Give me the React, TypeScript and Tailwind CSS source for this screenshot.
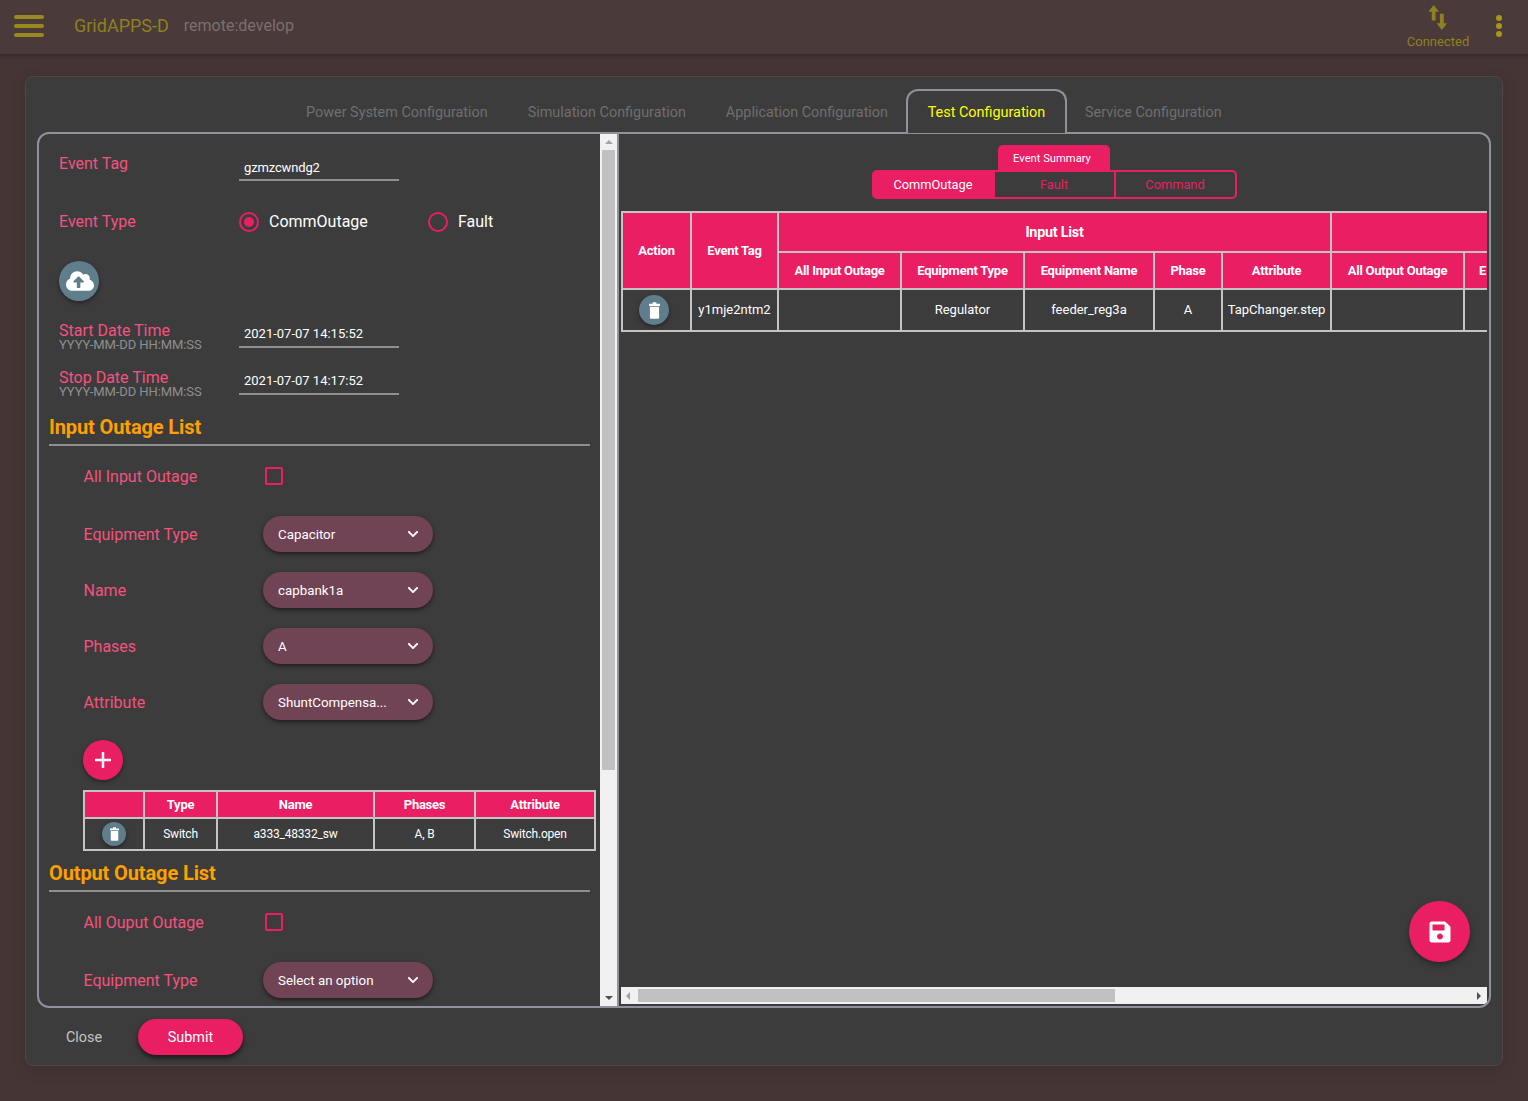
import { FaChevronDown, FaCloudUploadAlt, FaSave } from "react-icons/fa";

const rowLabel = "w-[179.5px] pt-[2px] text-base text-[#f5527f]";

const Select = ({ value }: { value: string }) => {
  return (
    <div className="w-[170px] h-9 pl-[15px] pr-[14px] flex items-center justify-between rounded-full bg-[#704355] shadow-[0_2px_4px_rgba(0,0,0,0.5)] text-[13.33px] text-white">
      <span className="pt-[2px]">{value}</span>
      <FaChevronDown className="w-3 h-3" />
    </div>
  );
};

const SelectRow = ({ label, value, mt }: { label: string; value: string; mt: string }) => {
  return (
    <div className={`flex items-center h-9 pl-[44.5px] ${mt}`}>
      <span className={rowLabel}>{label}</span>
      <Select value={value} />
    </div>
  );
};

const CheckRow = ({ label }: { label: string }) => {
  return (
    <div className="flex items-center h-9 pl-[44.5px] mt-3">
      <span className="w-[181.5px] pt-[2px] text-base text-[#f5527f]">{label}</span>
      <span className="w-[18px] h-[18px] border-2 border-[#e91e63] rounded-[2px]" />
    </div>
  );
};

const SectionTitle = ({ title, mt }: { title: string; mt: string }) => {
  return (
    <div className={`ml-[10px] w-[541px] h-[34px] border-b-2 border-[#8f8f8f] text-xl leading-[30px] font-bold tracking-[-0.12px] text-[#ffa000] ${mt}`}>
      {title}
    </div>
  );
};

const DateRow = ({ label, value, mt }: { label: string; value: string; mt: string }) => {
  return (
    <div className={`flex h-[30px] pl-5 ${mt}`}>
      <div className="w-[180px] pt-1 flex flex-col">
        <span className="text-base leading-[18px] text-[#f5527f]">{label}</span>
        <span className="text-[13px] leading-[10px] tracking-[-0.1px] text-[#8f8f8f]">YYYY-MM-DD HH:MM:SS</span>
      </div>
      <div className="w-40 pl-[5px] h-[30px] border-b-2 border-[#8f8f8f] text-[13px] leading-[32px] text-white">{value}</div>
    </div>
  );
};

const Radio = ({ label, on, width }: { label: string; on?: boolean; width: string }) => {
  return (
    <div className={`flex items-center gap-[10px] text-base text-white ${width}`}>
      <span className="w-5 h-5 rounded-full border-2 border-[#e91e63] flex items-center justify-center">
        {on && <span className="w-[10px] h-[10px] rounded-full bg-[#e91e63]" />}
      </span>
      {label}
    </div>
  );
};

const TrashButton = ({ size, icon }: { size: string; icon: string }) => {
  return (
    <span className={`flex items-center justify-center rounded-full bg-[#607d8b] shadow-[0_2px_4px_rgba(0,0,0,0.4)] ${size}`}>
      <svg viewBox="0 0 12 18" className={`fill-white ${icon}`}>
        <path d="M4 0h4v1.500h4V4H0V1.500h4z" />
        <path d="M1 5h10v12a1 1 0 0 1-1 1H2a1 1 0 0 1-1-1z" />
      </svg>
    </span>
  );
};

const tabClass = "px-5 h-[43px] leading-[48px] text-[14.4px] text-[#6f6f6f]";
const th = "border-2 border-[#c4c4c4] bg-[#e91e63] font-bold tracking-[-0.25px] text-white text-center";
const td = "border-2 border-[#c4c4c4] text-white text-center";

const LeftPane = () => {
  return (
    <div className="w-[561px] h-full pt-[14px] overflow-hidden shrink-0">
      <div className="flex h-[33px] pl-5">
        <span className="w-[180px] pt-1 text-base text-[#f5527f]">Event Tag</span>
        <div className="w-40 pl-[5px] border-b-2 border-[#8f8f8f] text-[13px] leading-[40px] tracking-[-0.15px] text-white">gzmzcwndg2</div>
      </div>
      <div className="flex items-center h-10 pl-5 mt-[21px]">
        <span className="w-[180px] text-base text-[#f5527f]">Event Type</span>
        <Radio label="CommOutage" on width="w-[189px]" />
        <Radio label="Fault" width="w-20" />
      </div>
      <div className="ml-5 mt-[19px] pl-px w-10 h-10 rounded-full bg-[#607d8b] shadow-[0_2px_4px_rgba(0,0,0,0.4)] flex items-center justify-center text-white">
        <FaCloudUploadAlt className="w-7 h-7" />
      </div>
      <DateRow label="Start Date Time" value="2021-07-07 14:15:52" mt="mt-[17px]" />
      <DateRow label="Stop Date Time" value="2021-07-07 14:17:52" mt="mt-[17px]" />
      <SectionTitle title="Input Outage List" mt="mt-[17px]" />
      <CheckRow label="All Input Outage" />
      <SelectRow label="Equipment Type" value="Capacitor" mt="mt-[22px]" />
      <SelectRow label="Name" value="capbank1a" mt="mt-5" />
      <SelectRow label="Phases" value="A" mt="mt-5" />
      <SelectRow label="Attribute" value="ShuntCompensa..." mt="mt-5" />
      <div className="ml-[44px] mt-5 w-10 h-10 rounded-full bg-[#e91e63] shadow-[0_2px_4px_rgba(0,0,0,0.4)] flex items-center justify-center">
        <svg viewBox="0 0 16 16" className="w-4 h-4 fill-white">
          <path d="M6.750 0h2.500v6.750H16v2.500H9.250V16h-2.500V9.250H0v-2.500h6.750z" />
        </svg>
      </div>
      <table className="ml-[44px] mt-[10px] w-[513px] table-fixed border-collapse text-xs">
        <thead>
          <tr className="h-[27px]">
            <th className={`${th} w-[60px] text-[13px]`}></th>
            <th className={`${th} w-[73px] text-[13px]`}>Type</th>
            <th className={`${th} w-[157px] text-[13px]`}>Name</th>
            <th className={`${th} w-[101px] text-[13px]`}>Phases</th>
            <th className={`${th} text-[13px]`}>Attribute</th>
          </tr>
        </thead>
        <tbody>
          <tr className="h-8">
            <td className={td}><TrashButton size="mx-auto w-6 h-6" icon="w-[9px] h-[14px]" /></td>
            <td className={`${td} tracking-[-0.2px]`}>Switch</td>
            <td className={`${td} tracking-[-0.2px]`}>a333_48332_sw</td>
            <td className={`${td} tracking-[-0.2px]`}>A, B</td>
            <td className={`${td} tracking-[-0.2px]`}>Switch.open</td>
          </tr>
        </tbody>
      </table>
      <SectionTitle title="Output Outage List" mt="mt-[7px]" />
      <CheckRow label="All Ouput Outage" />
      <SelectRow label="Equipment Type" value="Select an option" mt="mt-[22px]" />
    </div>
  );
};

const VerticalScrollbar = () => {
  return (
    <div className="w-[17px] h-full shrink-0 bg-[#f1f1f1] flex flex-col items-center">
      <span className="mt-[6px] w-0 h-0 border-x-4 border-x-transparent border-b-4 border-b-[#a3a3a3]" />
      <span className="mt-[6px] w-[13px] h-[620px] bg-[#c1c1c1]" />
      <span className="mt-auto mb-[6px] w-0 h-0 border-x-4 border-x-transparent border-t-4 border-t-[#505050]" />
    </div>
  );
};

const EventTabs = () => {
  return (
    <div className="flex flex-col items-center pt-[11px]">
      <div className="w-28 h-[26px] pr-1 rounded-t-[5px] bg-[#e91e63] text-[11.2px] leading-[28px] text-white text-center">Event Summary</div>
      <div className="w-[365px] h-[29px] flex rounded-[5px] border-2 border-[#e91e63] text-[12.8px] leading-[25px] text-center text-[#e91e63] -mt-px">
        <div className="w-[121px] pr-[2px] bg-[#e91e63] text-white">CommOutage</div>
        <div className="w-[121px] border-r-2 border-[#e91e63]">Fault</div>
        <div className="flex-1">Command</div>
      </div>
    </div>
  );
};

const SummaryTable = () => {
  return (
    <div className="mt-3 ml-[2px] w-[866px] overflow-hidden">
      <table className="w-[960px] table-fixed border-collapse text-[13px]">
        <colgroup>
          <col className="w-[69px]" />
          <col className="w-[87px]" />
          <col className="w-[123px]" />
          <col className="w-[123px]" />
          <col className="w-[130px]" />
          <col className="w-[68px]" />
          <col className="w-[109px]" />
          <col className="w-[133px]" />
          <col className="w-[118px]" />
        </colgroup>
        <thead>
          <tr className="h-10">
            <th rowSpan={2} className={th}>Action</th>
            <th rowSpan={2} className={th}>Event Tag</th>
            <th colSpan={5} className={`${th} pt-[2px] text-[14.4px]`}>Input List</th>
            <th colSpan={2} className={th}></th>
          </tr>
          <tr className="h-[37px]">
            <th className={th}>All Input Outage</th>
            <th className={th}>Equipment Type</th>
            <th className={th}>Equipment Name</th>
            <th className={th}>Phase</th>
            <th className={th}>Attribute</th>
            <th className={th}>All Output Outage</th>
            <th className={`${th} text-left! pl-[14px]`}>E</th>
          </tr>
        </thead>
        <tbody>
          <tr className="h-[42px]">
            <td className={td}><TrashButton size="ml-[16px] w-[30px] h-[30px]" icon="w-[11px] h-[17px]" /></td>
            <td className={td}>y1mje2ntm2</td>
            <td className={td}></td>
            <td className={td}>Regulator</td>
            <td className={td}>feeder_reg3a</td>
            <td className={td}>A</td>
            <td className={td}>TapChanger.step</td>
            <td className={td}></td>
            <td className={td}></td>
          </tr>
        </tbody>
      </table>
    </div>
  );
};

const HorizontalScrollbar = () => {
  return (
    <div className="mt-auto mb-[2px] mx-[2px] h-[17px] bg-[#f1f1f1] flex items-center">
      <span className="ml-[5px] w-0 h-0 border-y-4 border-y-transparent border-r-4 border-r-[#a3a3a3]" />
      <span className="ml-2 w-[477px] h-[13px] bg-[#c1c1c1]" />
      <span className="ml-auto mr-[6px] w-0 h-0 border-y-4 border-y-transparent border-l-4 border-l-[#505050]" />
    </div>
  );
};

export default function App() {
  return (
    <div className="w-[1528px] h-[1101px] overflow-hidden bg-[#453535] font-['Roboto',sans-serif]">
      <header className="h-[54px] bg-[#4a3a3a] shadow-[0_2px_4px_rgba(0,0,0,0.2)] flex items-center pl-[14px] pb-[3px]">
        <div className="w-[30px] flex flex-col gap-[5px]">
          <span className="h-1 rounded-full bg-[#9a8820]" />
          <span className="h-1 rounded-full bg-[#9a8820]" />
          <span className="h-1 rounded-full bg-[#9a8820]" />
        </div>
        <span className="ml-[30px] text-lg text-[#8f8020]">GridAPPS-D</span>
        <span className="ml-[15px] text-base text-[#7a7070]">remote:develop</span>
        <div className="ml-auto mt-[3px] w-[62px] flex flex-col items-center">
          <svg viewBox="0 0 20 26" className="w-5 h-[25px] fill-[#8f8020]">
            <path d="M5.500 0 11 7H7.500v9h-4V7H0zM12 9h4v10h3.500L14 26l-5.500-7H12z" />
          </svg>
          <span className="mt-1 text-[13px] leading-4 text-[#8f8020]">Connected</span>
        </div>
        <div className="ml-[27px] mr-[26px] flex flex-col gap-[2px]">
          <span className="w-[6px] h-[6px] rounded-full bg-[#a8951c]" />
          <span className="w-[6px] h-[6px] rounded-full bg-[#a8951c]" />
          <span className="w-[6px] h-[6px] rounded-full bg-[#a8951c]" />
        </div>
      </header>
      <main className="pt-[22px] pl-[25px]">
        <div className="w-[1478px] h-[990px] rounded-lg bg-[#3c3c3c] border border-[#524646] pl-[11px] pt-3 shadow-[0_4px_16px_rgba(0,0,0,0.1)]">
          <nav className="relative z-10 flex h-[43px] pl-[249px]">
            <div className={tabClass}>Power System Configuration</div>
            <div className={tabClass}>Simulation Configuration</div>
            <div className={tabClass}>Application Configuration</div>
            <div className="w-[161px] h-[44px] mx-[-2px] leading-[44px] text-center text-[14.4px] text-[#ffff00] bg-[#3c3c3c] border-2 border-b-0 border-[#8f919c] rounded-t-xl">Test Configuration</div>
            <div className={tabClass}>Service Configuration</div>
          </nav>
          <div className="w-[1454px] h-[876px] border-2 border-[#8f919c] rounded-xl flex overflow-hidden">
            <LeftPane />
            <VerticalScrollbar />
            <div className="w-[2px] bg-[#8f919c] shrink-0" />
            <section className="relative flex-1 flex flex-col">
              <EventTabs />
              <SummaryTable />
              <HorizontalScrollbar />
              <button className="absolute left-[790px] top-[767px] w-[61px] h-[61px] rounded-full bg-[#e91e63] shadow-[0_3px_6px_rgba(0,0,0,0.35)] flex items-center justify-center text-white">
                <FaSave className="w-6 h-6" />
              </button>
            </section>
          </div>
          <footer className="flex items-center h-9 mt-[11px] pl-[29px]">
            <span className="w-[72px] pt-[2px] text-[14.4px] text-[#c4c4c4]">Close</span>
            <button className="w-[105px] h-9 pt-[2px] rounded-full bg-[#e91e63] shadow-[0_3px_5px_rgba(0,0,0,0.6)] text-[14.4px] text-white">Submit</button>
          </footer>
        </div>
      </main>
    </div>
  );
}
